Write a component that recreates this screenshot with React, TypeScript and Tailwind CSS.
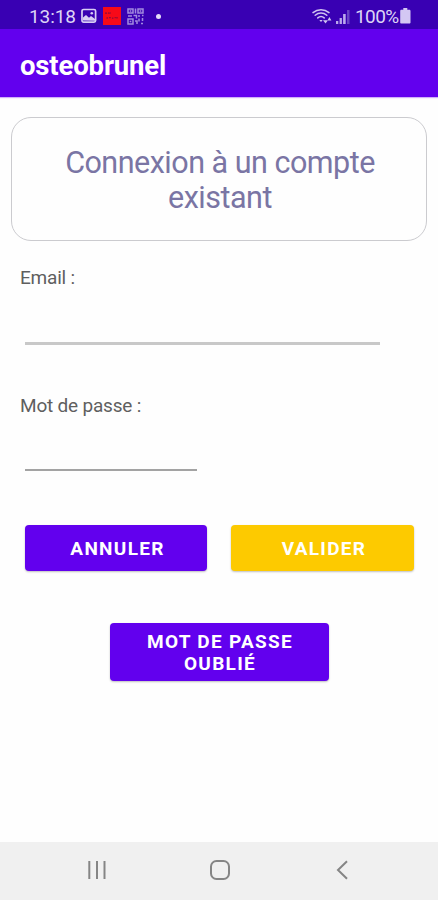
import type { ReactNode } from "react";

function PictureIcon() {
  return (
    <svg width="16" height="16" viewBox="0 0 16 16" fill="none">
      <rect x="1" y="1.5" width="13.6" height="12.6" rx="1.6" stroke="#d8cdf4" strokeWidth="1.7" />
      <path d="M2 12.5V9.5l3-2.6 3 2.8 2-1.6 4 3v1.6z" fill="#d8cdf4" />
      <circle cx="10.8" cy="5.2" r="1.3" fill="#d8cdf4" />
    </svg>
  );
}

function AppBadgeIcon() {
  return (
    <svg width="18" height="18" viewBox="0 0 18 18" fill="none">
      <rect width="18" height="18" fill="#f70a18" />
      <path d="M2 6.2h2M5 5.8l1.500.6M7.300 5.600v1M3.500 11h1.400M6 10.700h1.800M9 11.200h1.400M11.600 10.600h1.200M14 10v1.400" stroke="#8c0b3c" strokeWidth="1.3" />
    </svg>
  );
}

function QrIcon() {
  return (
    <svg width="17" height="17" viewBox="0 0 17 17" fill="none" stroke="#a28be0" strokeWidth="1.5">
      <path d="M1 1h5v4H1zM1 11h5v5H1zM11 1h5v4h-5z" />
      <path d="M2.700 3h1.600M2.700 13.500h1.600M12.700 3h1.600M8.500.5v5M1 8h4M6.500 7.500h3v3M11 8h2M15 7.500h1.500M8 13h2v3M12 10.500v3M14 15.500h2M15.500 10v3" />
    </svg>
  );
}

function WifiIcon() {
  return (
    <svg width="20" height="17" viewBox="0 0 20 17" fill="none" stroke="#cfc3f0" strokeWidth="1.5" strokeLinecap="round">
      <path d="M1 4.600C5.600.7 12.400.7 17 4.600M3.200 7.200c3.400-2.900 8.200-2.900 11.600 0M5.800 9.900c1.900-1.600 4.500-1.600 6.400 0" />
      <path d="M7.300 11.900h3.400L9 14z" fill="#cfc3f0" stroke="none" />
      <path d="M11 12.300h5l-2.500 3.200zM15.400 12.400h4L17.400 9z" fill="#cfc3f0" stroke="none" />
    </svg>
  );
}

function SignalIcon() {
  return (
    <svg width="14" height="15" viewBox="0 0 14 15" fill="#bba9ec">
      <rect x="0" y="12" width="2.3" height="3" />
      <rect x="3.6" y="9" width="2.3" height="6" />
      <rect x="7.1" y="5" width="2.6" height="10" />
      <rect x="11" y="1" width="2.5" height="14" fill="#6943c6" />
    </svg>
  );
}

function BatteryIcon() {
  return (
    <svg width="11" height="16" viewBox="0 0 11 16" fill="#d3c7f3">
      <path d="M3.300 0h4v1.800h1.900c.8 0 1.300.5 1.300 1.300v11.300c0 .7-.5 1.200-1.200 1.200H1.400c-.7 0-1.200-.5-1.200-1.200V3.100c0-.8.5-1.300 1.300-1.300h1.800z" />
    </svg>
  );
}

function StatusBar() {
  return (
    <div className="flex h-[29px] items-center bg-[#3900b3] pl-[29px] pr-[27px] pt-[3px] text-[19px] leading-none text-[#ddd4f5]">
      <span className="w-[51px] tracking-[-0.1px]">13:18</span>
      <div className="ml-[1px] flex items-center">
        <PictureIcon />
        <div className="ml-[6px]">
          <AppBadgeIcon />
        </div>
        <div className="ml-[6px]">
          <QrIcon />
        </div>
        <div className="ml-[12px] size-[5px] rounded-full bg-[#e4dcf8]" />
      </div>
      <div className="ml-auto flex items-center">
        <WifiIcon />
        <div className="ml-[4px]">
          <SignalIcon />
        </div>
        <span className="ml-[5px] w-[45px] tracking-[-0.6px] whitespace-nowrap">100%</span>
        <BatteryIcon />
      </div>
    </div>
  );
}

function ActionButton({ className, children }: { className: string; children: ReactNode }) {
  return (
    <button
      type="button"
      className={`rounded-[4px] pt-[2px] text-center text-[19px] font-bold leading-[22px] tracking-[1.3px] text-white shadow-[0_1px_2px_rgba(0,0,0,0.25)] ${className}`}
    >
      {children}
    </button>
  );
}

function NavigationBar() {
  return (
    <nav className="flex h-[58px] items-center justify-between bg-[#f0f0f0] pb-[2px] pl-[87px] pr-[90px]">
      <svg width="20" height="20" viewBox="0 0 20 20" stroke="#858585" strokeWidth="2">
        <path d="M2.300 1v18M10 1v18M17.500 1v18" />
      </svg>
      <svg className="-ml-[4px]" width="22" height="22" viewBox="0 0 22 22" fill="none" stroke="#858585" strokeWidth="2">
        <rect x="2" y="2" width="18" height="18" rx="5.5" />
      </svg>
      <svg width="12" height="20" viewBox="0 0 12 20" fill="none" stroke="#858585" strokeWidth="2">
        <path d="M11 1.300L2 10l9 8.700" />
      </svg>
    </nav>
  );
}

export default function App() {
  return (
    <div className="flex h-[900px] w-[438px] flex-col overflow-hidden bg-[#fefefe] font-['Roboto',sans-serif]">
      <StatusBar />
      <header className="flex h-[68px] items-center bg-[#6200ee] pl-[20px] pt-[5px] shadow-[0_1px_1px_rgba(98,0,238,0.3)]">
        <h1 className="text-[27.5px] font-bold tracking-[-0.15px] text-white">osteobrunel</h1>
      </header>

      <main className="flex-1">
        <div className="mx-[11px] mt-[20px] flex h-[124px] items-center justify-center rounded-[20px] border-[1.5px] border-[#cbcbcf] pl-[2px] pt-[1px]">
          <h2 className="w-[340px] text-center text-[30.5px] leading-[35px] tracking-[-0.5px] text-[#7a75a4]">Connexion à un compte existant</h2>
        </div>

        <form className="flex flex-col">
          <label htmlFor="email" className="ml-[20px] mt-[26px] text-[19px] leading-[22px] tracking-[-0.2px] text-[#5f5f5f]">
            Email :
          </label>
          <input id="email" type="email" className="ml-[25px] mt-[12px] h-[44px] w-[355px] border-b-[3px] border-[#c8c8c8] outline-none" />

          <label htmlFor="password" className="ml-[20px] mt-[50px] text-[19px] leading-[22px] tracking-[-0.2px] text-[#5f5f5f]">
            Mot de passe :
          </label>
          <input id="password" type="password" className="ml-[25px] mt-[12px] h-[42px] w-[172px] border-b-2 border-[#a3a3a3] outline-none" />

          <div className="ml-[25px] mt-[54px] flex gap-[24px]">
            <ActionButton className="h-[46px] w-[182px] bg-[#6200ee] pl-[3px]">ANNULER</ActionButton>
            <ActionButton className="h-[46px] w-[183px] bg-[#fdca00] pl-[3px]">VALIDER</ActionButton>
          </div>
          <ActionButton className="mt-[52px] h-[58px] w-[219px] self-center bg-[#6200ee] pl-[26px] pr-[24px]">MOT DE PASSE OUBLIÉ</ActionButton>
        </form>
      </main>

      <NavigationBar />
    </div>
  );
}
